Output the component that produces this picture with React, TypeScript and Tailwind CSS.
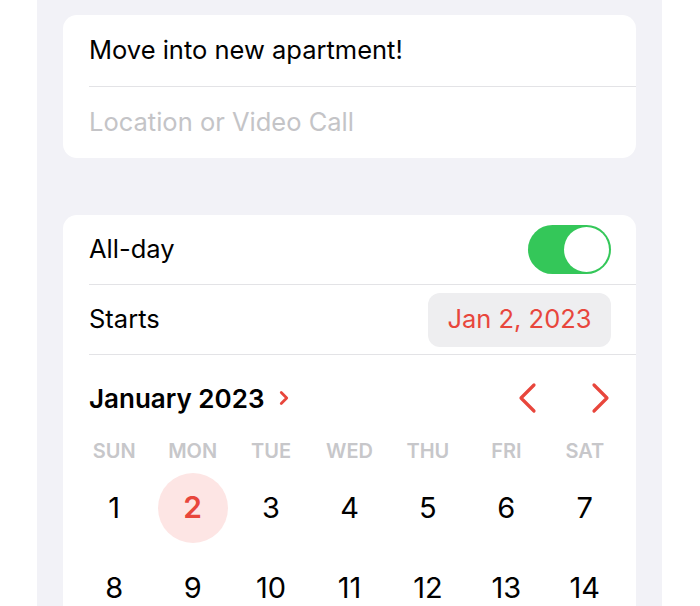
import { ChevronRight } from "lucide-react";

const days = ["SUN", "MON", "TUE", "WED", "THU", "FRI", "SAT"];
const weeks = [
  [1, 2, 3, 4, 5, 6, 7],
  [8, 9, 10, 11, 12, 13, 14],
];

function NavChevron({ left }: { left?: boolean }) {
  return (
    <svg width="20" height="32" viewBox="0 0 20 32" fill="none" stroke="#e8463c" strokeWidth="3.2" strokeLinecap="round" strokeLinejoin="round">
      <polyline points={left ? "17,3 4,16 17,29" : "3,3 16,16 3,29"} />
    </svg>
  );
}

export default function App() {
  return (
    <div className="flex h-[606px] w-[700px] overflow-hidden bg-white" style={{ fontFamily: "Inter, 'Noto Sans', sans-serif" }}>
      <div className="ml-[37px] flex w-[625px] flex-col bg-[#f2f2f7] px-[26px] pt-[15px]">
        <div className="rounded-[14px] bg-white">
          <div className="flex h-[71px] items-center pl-[26px] text-[25.5px] text-black">Move into new apartment!</div>
          <div className="ml-[26px] h-px bg-[#e3e3e6]" />
          <div className="flex h-[71px] items-center pl-[26px] text-[25.5px] text-[#c4c4c7]">Location or Video Call</div>
        </div>

        <div className="mt-[57px] rounded-t-[14px] bg-white pb-10">
          <div className="flex h-[69px] items-center justify-between pl-[26px] pr-[25px]">
            <span className="text-[25.5px] text-black">All-day</span>
            <div className="flex h-[49px] w-[83px] items-center justify-end rounded-full bg-[#34c759] pr-[2px]">
              <div className="h-[45px] w-[45px] rounded-full bg-white" />
            </div>
          </div>
          <div className="ml-[26px] h-px bg-[#e3e3e6]" />
          <div className="flex h-[69px] items-center justify-between pl-[26px] pr-[25px]">
            <span className="text-[25.5px] text-black">Starts</span>
            <div className="flex h-[54px] w-[183px] items-center justify-center rounded-[12px] bg-[#eeeef0] text-[25.5px] text-[#e8463c]">
              Jan 2, 2023
            </div>
          </div>
          <div className="ml-[26px] h-px bg-[#e3e3e6]" />

          <div className="flex h-[82px] items-center justify-between pl-[26px] pr-[25px] pt-[4px]">
            <div className="flex items-center gap-[9px]">
              <span className="text-[26px] font-semibold text-black">January 2023</span>
              <ChevronRight className="h-[22px] w-[22px] text-[#e8463c]" strokeWidth={3} />
            </div>
            <div className="flex items-center gap-[54px]">
              <NavChevron left />
              <NavChevron />
            </div>
          </div>

          <div className="grid grid-cols-7 px-[12px]">
            {days.map((d) => (
              <div key={d} className="flex h-[28px] items-center justify-center text-[20px] font-semibold text-[#c7c7ca]">
                {d}
              </div>
            ))}
          </div>

          <div className="mt-[7px] flex flex-col gap-[9px] px-[12px]">
            {weeks.map((w, i) => (
              <div key={i} className="grid grid-cols-7">
                {w.map((n) => (
                  <div key={n} className="flex h-[71px] items-center justify-center">
                    {n === 2 ? (
                      <div className="flex h-[70px] w-[70px] items-center justify-center rounded-full bg-[#fde5e4] text-[30px] font-semibold text-[#e8463c]">
                        {n}
                      </div>
                    ) : (
                      <span className="text-[29px] text-black">{n}</span>
                    )}
                  </div>
                ))}
              </div>
            ))}
          </div>
        </div>
      </div>
    </div>
  );
}
